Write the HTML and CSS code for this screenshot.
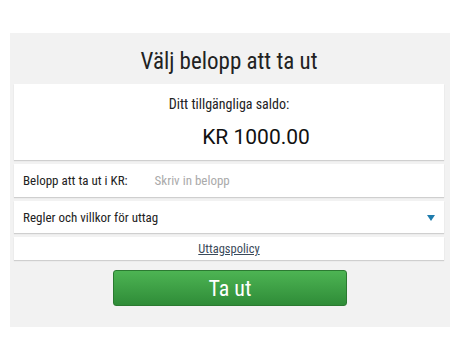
FILE: index.html
```html
<!DOCTYPE html>
<html lang="sv">
<head>
<meta charset="utf-8">
<link rel="stylesheet" href="styles.css">
</head>
<body>
<div class="panel">
  <h1 class="title">Välj belopp att ta ut</h1>
  <div class="card balance">
    <div class="balance-label">Ditt tillgängliga saldo:</div>
    <div class="balance-value">KR 1000.00</div>
  </div>
  <div class="card row">
    <span class="label">Belopp att ta ut i KR:</span>
    <span class="placeholder">Skriv in belopp</span>
  </div>
  <div class="card row rules">
    <span class="label">Regler och villkor för uttag</span>
    <span class="caret"></span>
  </div>
  <div class="card policy"><a class="policy-link">Uttagspolicy</a></div>
  <div class="actions"><button class="btn">Ta ut</button></div>
</div>
</body>
</html>
```
FILE: styles.css
```css
html, body { margin: 0; padding: 0; background: #fff; }
body { padding: 33px 10px 0 10px; font-family: Roboto, "Noto Sans", sans-serif; color: #222; }
.panel {
  width: 440px;
  height: 294px;
  background: #f2f2f2;
  box-sizing: border-box;
  padding: 0 6px 0 4px;
  display: flex;
  flex-direction: column;
}
.title {
  margin: 0;
  height: 51px;
  box-sizing: border-box;
  padding-top: 5px;
  display: flex;
  align-items: center;
  justify-content: center;
  font-family: "Roboto Condensed", Roboto, sans-serif;
  font-weight: 400;
  font-size: 23px;
  color: #222;
}
.card {
  background: #fff;
  box-shadow: 0 1px 1px rgba(0,0,0,0.14);
  margin-bottom: 4px;
}
.balance { height: 76px; display: flex; flex-direction: column; align-items: center; }
.balance-label {
  font-family: "Roboto Condensed", Roboto, sans-serif;
  font-size: 14px;
  margin-top: 12px;
  line-height: 16px;
  color: #222;
}
.balance-value {
  font-size: 21px;
  margin-top: 13px;
  padding-left: 54px;
  line-height: 25px;
  color: #111;
}
.row {
  display: flex;
  align-items: center;
  padding: 0 9px;
  font-family: "Roboto Condensed", Roboto, sans-serif;
  font-size: 13px;
}
.row:nth-of-type(2) { height: 33px; }
.rules { height: 32px; justify-content: space-between; padding-right: 9px; }
.label { color: #222; }
.placeholder { color: #aaa; margin-left: 27px; }
.caret {
  width: 0; height: 0;
  border-left: 4.5px solid transparent;
  border-right: 4.5px solid transparent;
  border-top: 6px solid #1f7cad;
  margin-top: 1px;
}
.policy {
  height: 23px;
  display: flex;
  align-items: center;
  justify-content: center;
  font-family: "Roboto Condensed", Roboto, sans-serif;
  font-size: 12.5px;
}
.policy-link { color: #3b4a5a; text-decoration: underline; }
.actions { display: flex; justify-content: center; padding-top: 6px; padding-left: 2px; }
.btn {
  width: 234px;
  height: 36px;
  border: 1px solid #2b7a31;
  border-radius: 3px;
  background: linear-gradient(#4db453, #2f8c38);
  color: #fff;
  font-family: "Roboto Condensed", Roboto, sans-serif;
  font-size: 22px;
  padding: 0;
}
```
